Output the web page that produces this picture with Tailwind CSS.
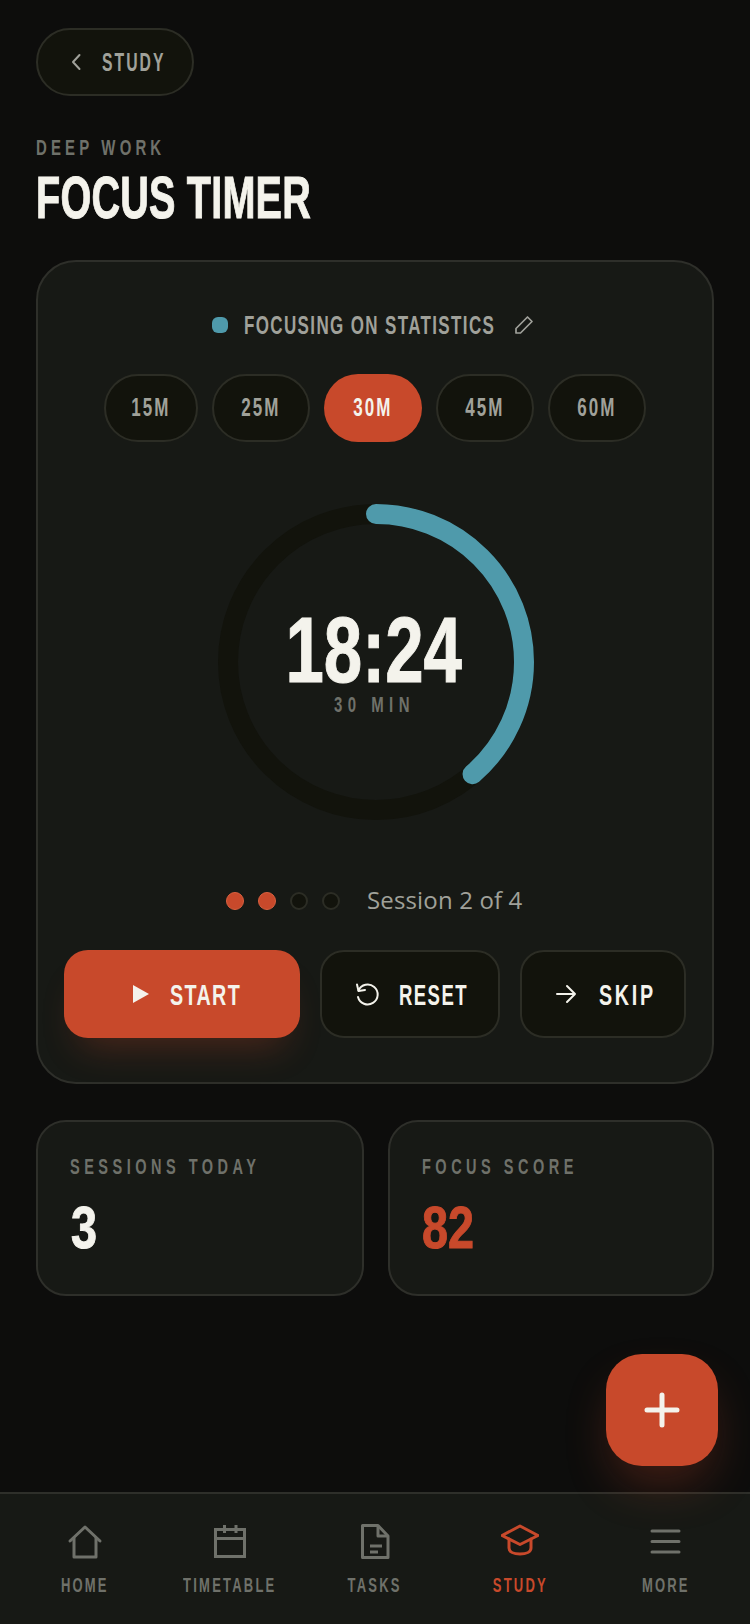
<!DOCTYPE html>
<html lang="en">
<head>
    <meta charset="UTF-8">
    <meta name="viewport" content="width=device-width, initial-scale=1.0">
    <title>Focus Timer</title>
    <script src="https://cdn.jsdelivr.net/npm/@tailwindcss/browser@4"></script>
</head>
<body class="bg-[#0d0d0c] font-['Liberation_Sans',sans-serif]">
<div class="relative flex flex-col w-[750px] h-[1624px] overflow-hidden">
    <main class="flex-1 px-9 pt-7">
        <!-- back -->
        <div class="flex items-center w-[158px] h-[68px] pl-[29px] rounded-full border-2 border-[#2c2d25] bg-[#12130c] text-[#a0a19a]">
            <svg class="shrink-0 w-[20px] h-[20px]" viewBox="0 0 20 20" fill="none" stroke="currentColor" stroke-width="2" stroke-linecap="round" stroke-linejoin="round"><path d="M12.500 3 6 10l6.500 7"/></svg>
            <span class="ml-[15px] origin-left scale-x-[.63] whitespace-nowrap text-[25px] leading-none font-bold tracking-[3.200px]">STUDY</span>
        </div>

        <p class="mt-[38px] origin-left scale-x-[.68] whitespace-nowrap text-[22px] leading-[28px] font-bold tracking-[6.100px] text-[#6f716a]">DEEP WORK</p>
        <h1 class="mt-[3px] origin-left scale-x-[.66] whitespace-nowrap text-[60px] leading-[66px] font-bold tracking-[0.300px] text-[#f4f3ec] [-webkit-text-stroke:1px_#f4f3ec]">FOCUS TIMER</h1>

        <!-- timer card -->
        <section class="mt-[29px] h-[824px] rounded-[40px] border-2 border-[#2e2f2a] bg-[#171915] px-[26px] pt-[47px]">
            <div class="flex items-center justify-center h-[32px] pr-[5px]">
                <span class="shrink-0 w-[16px] h-[16px] rounded-[6px] bg-[#4f9aab]"></span>
                <span class="ml-[16px] w-[251px] origin-left scale-x-[.68] whitespace-nowrap text-[25px] leading-none font-bold tracking-[2px] text-[#a0a19a]">FOCUSING ON STATISTICS</span>
                <svg class="shrink-0 ml-[19px] w-[20px] h-[20px]" viewBox="0 0 20 20" fill="none" stroke="#a0a19a" stroke-width="1.700" stroke-linejoin="round"><path d="M2 18v-4.500L13.500 2l4.500 4.500L6.500 18z"/></svg>
            </div>

            <div class="flex justify-center gap-[14px] mt-[33px]">
                <span class="flex items-center justify-center w-[94px] h-[68px] rounded-full border-2 border-[#2c2d25] bg-[#12130c] text-[#a0a19a]"><span class="scale-x-[.68] text-[25px] font-bold tracking-[3px]">15M</span></span>
                <span class="flex items-center justify-center w-[98px] h-[68px] rounded-full border-2 border-[#2c2d25] bg-[#12130c] text-[#a0a19a]"><span class="scale-x-[.68] text-[25px] font-bold tracking-[3px]">25M</span></span>
                <span class="flex items-center justify-center w-[98px] h-[68px] rounded-full bg-[#c8492b] text-[#f4f3ec]"><span class="scale-x-[.68] text-[25px] font-bold tracking-[3px]">30M</span></span>
                <span class="flex items-center justify-center w-[98px] h-[68px] rounded-full border-2 border-[#2c2d25] bg-[#12130c] text-[#a0a19a]"><span class="scale-x-[.68] text-[25px] font-bold tracking-[3px]">45M</span></span>
                <span class="flex items-center justify-center w-[98px] h-[68px] rounded-full border-2 border-[#2c2d25] bg-[#12130c] text-[#a0a19a]"><span class="scale-x-[.68] text-[25px] font-bold tracking-[3px]">60M</span></span>
            </div>

            <!-- ring -->
            <div class="relative w-[316px] h-[316px] ml-[154px] mt-[62px]">
                <svg class="w-[316px] h-[316px] -rotate-90" viewBox="0 0 316 316" fill="none" stroke-width="20">
                    <circle cx="158" cy="158" r="148" stroke="#12130c"/>
                    <circle cx="158" cy="158" r="148" stroke="#4f9aab" stroke-linecap="round" stroke-dasharray="359.600 929.900"/>
                </svg>
                <div class="absolute inset-0 flex flex-col items-center pt-[110px] pr-[4px]">
                    <span class="scale-x-[.75] text-[92px] leading-[72px] font-bold text-[#f4f3ec] [-webkit-text-stroke:1px_#f4f3ec]">18:24</span>
                    <span class="mt-[5px] scale-x-[.68] whitespace-nowrap text-[22px] leading-[28px] font-bold tracking-[8px] text-[#6f716a]">30 MIN</span>
                </div>
            </div>

            <!-- sessions -->
            <div class="flex items-center mt-[63px] h-[36px] pl-[162px]">
                <span class="w-[18px] h-[18px] rounded-full bg-[#c8492b] border border-[#d9603f]"></span>
                <span class="ml-[14px] w-[18px] h-[18px] rounded-full bg-[#c8492b] border border-[#d9603f]"></span>
                <span class="ml-[14px] w-[18px] h-[18px] rounded-full bg-[#12130c] border-2 border-[#2c2d25]"></span>
                <span class="ml-[14px] w-[18px] h-[18px] rounded-full bg-[#12130c] border-2 border-[#2c2d25]"></span>
                <span class="ml-[27px] mt-[-2px] font-['Open_Sans',sans-serif] text-[24px] leading-none tracking-[0.150px] text-[#a0a19a]">Session 2 of 4</span>
            </div>

            <!-- actions -->
            <div class="flex gap-[20px] mt-[31px]">
                <button class="flex items-center w-[236px] h-[88px] pl-[69px] rounded-[24px] bg-[#c8492b] text-[#f4f3ec] shadow-[0_24px_36px_-16px_rgba(200,73,43,0.3)]">
                    <svg class="shrink-0 w-[16px] h-[18px]" viewBox="0 0 16 18" fill="currentColor"><path d="M0 0v18l16-9z"/></svg>
                    <span class="ml-[21px] mt-[2px] origin-left scale-x-[.68] whitespace-nowrap text-[29px] leading-none font-bold tracking-[2px]">START</span>
                </button>
                <button class="flex items-center w-[180px] h-[88px] pl-[32px] rounded-[24px] border-2 border-[#2c2d25] bg-[#12130c] text-[#f4f3ec]">
                    <svg class="shrink-0 w-[26px] h-[26px]" viewBox="0 0 26 26" fill="none" stroke="currentColor" stroke-width="2" stroke-linecap="round" stroke-linejoin="round"><path d="M4.500 9.500A10 10 0 1 1 4 16"/><path d="M3 3.500l1.500 6.500 6.500-1"/></svg>
                    <span class="ml-[19px] mt-[2px] origin-left scale-x-[.64] whitespace-nowrap text-[29px] leading-none font-bold tracking-[2.200px]">RESET</span>
                </button>
                <button class="flex items-center w-[166px] h-[88px] pl-[33px] rounded-[24px] border-2 border-[#2c2d25] bg-[#12130c] text-[#f4f3ec]">
                    <svg class="shrink-0 w-[22px] h-[22px]" viewBox="0 0 22 22" fill="none" stroke="currentColor" stroke-width="2" stroke-linecap="round" stroke-linejoin="round"><path d="M2 11h18M12 3l8 8-8 8"/></svg>
                    <span class="ml-[22px] mt-[2px] origin-left scale-x-[.68] whitespace-nowrap text-[29px] leading-none font-bold tracking-[4px]">SKIP</span>
                </button>
            </div>
        </section>

        <!-- stats -->
        <div class="flex gap-[24px] mt-[36px]">
            <div class="w-[328px] h-[176px] rounded-[30px] border-2 border-[#2e2f2a] bg-[#171915] pl-[32px] pt-[32px]">
                <p class="origin-left scale-x-[.66] whitespace-nowrap text-[22px] leading-[26px] font-bold tracking-[6.800px] text-[#6f716a]">SESSIONS TODAY</p>
                <p class="mt-[18px] ml-[1px] origin-left scale-x-[.78] text-[60px] leading-[60px] font-bold text-[#f4f3ec] [-webkit-text-stroke:1px_#f4f3ec]">3</p>
            </div>
            <div class="w-[326px] h-[176px] rounded-[30px] border-2 border-[#2e2f2a] bg-[#171915] pl-[32px] pt-[32px]">
                <p class="origin-left scale-x-[.66] whitespace-nowrap text-[22px] leading-[26px] font-bold tracking-[6.800px] text-[#6f716a]">FOCUS SCORE</p>
                <p class="mt-[18px] origin-left scale-x-[.78] text-[60px] leading-[60px] font-bold text-[#c8492b] [-webkit-text-stroke:1px_#c8492b]">82</p>
            </div>
        </div>
    </main>

    <!-- bottom nav -->
    <nav class="grid grid-cols-5 h-[132px] px-[12px] pt-[30px] border-t-2 border-[#2e2f2a] bg-[#171915] text-[#6f716a]">
        <a class="flex flex-col items-center">
            <svg class="w-[36px] h-[36px]" viewBox="0 0 36 36" fill="none" stroke="currentColor" stroke-width="3" stroke-linejoin="round" stroke-linecap="round"><path d="M3 17 18 3l15 14"/><path d="M7 14v19h22V14"/></svg>
            <span class="mt-[15px] scale-x-[.65] whitespace-nowrap text-[20px] leading-[20px] font-bold tracking-[3.400px]">HOME</span>
        </a>
        <a class="flex flex-col items-center">
            <svg class="w-[36px] h-[36px]" viewBox="0 0 36 36" fill="none" stroke="currentColor" stroke-width="3"><path d="M3.500 5.500h29v27h-29zM3.500 14.500h29M12.500 1v8M24 1v8"/></svg>
            <span class="mt-[15px] scale-x-[.65] whitespace-nowrap text-[20px] leading-[20px] font-bold tracking-[3.400px]">TIMETABLE</span>
        </a>
        <a class="flex flex-col items-center">
            <svg class="w-[36px] h-[36px]" viewBox="0 0 36 36" fill="none" stroke="currentColor" stroke-width="3" stroke-linejoin="round"><path d="M5.500 1.500H21L31 12v21.500H5.500z"/><path d="M21 1.500V12h10M13 22h12M13 28h8"/></svg>
            <span class="mt-[15px] scale-x-[.65] whitespace-nowrap text-[20px] leading-[20px] font-bold tracking-[3.400px]">TASKS</span>
        </a>
        <a class="flex flex-col items-center text-[#c8492b]">
            <svg class="w-[38px] h-[36px]" viewBox="0 0 38 36" fill="none" stroke="currentColor" stroke-width="3" stroke-linejoin="round" stroke-linecap="round"><path d="M19 2 37 11.500 19 20.500 1 11.500z"/><path d="M8 15v9c0 4 5 6 11 6s11-2 11-6v-9"/></svg>
            <span class="mt-[15px] scale-x-[.65] whitespace-nowrap text-[20px] leading-[20px] font-bold tracking-[3.400px]">STUDY</span>
        </a>
        <a class="flex flex-col items-center">
            <svg class="w-[36px] h-[36px]" viewBox="0 0 36 36" fill="none" stroke="currentColor" stroke-width="3" stroke-linecap="round"><path d="M5 7h27M5 17.500h27M5 28h27"/></svg>
            <span class="mt-[15px] scale-x-[.65] whitespace-nowrap text-[20px] leading-[20px] font-bold tracking-[3.400px]">MORE</span>
        </a>
    </nav>

    <!-- add button -->
    <button class="absolute left-[606px] top-[1354px] flex items-center justify-center w-[112px] h-[112px] rounded-[36px] bg-[#c8492b] text-[#f4f3ec] shadow-[0_24px_48px_-8px_rgba(200,73,43,0.3)]">
        <svg class="w-[36px] h-[36px]" viewBox="0 0 36 36" fill="none" stroke="currentColor" stroke-width="5" stroke-linecap="round"><path d="M18 3v30M3 18h30"/></svg>
    </button>
</div>
</body>
</html>
